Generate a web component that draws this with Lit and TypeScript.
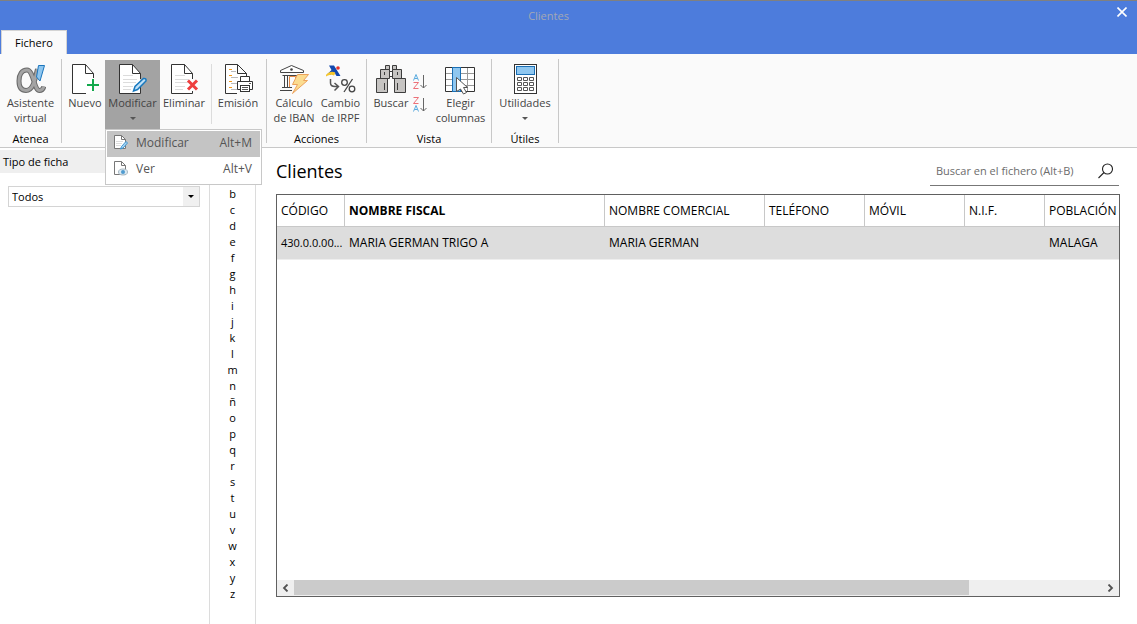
import { LitElement, html, css, svg, nothing, TemplateResult } from 'lit';
import { customElement, property } from 'lit/decorators.js';

const page = svg`
  <path d="M0.5 0.5H13.5L21.5 9.5V29.5H0.5Z" fill="#fff" stroke="none"/>
  <path d="M14 29.5H0.5V0.5H13.5L21.5 9.5V15" fill="none" stroke="#333"/>
  <path d="M13.5 0.5V9.5H21.5" fill="none" stroke="#333"/>`;
const rules = svg`<path d="M4 11.5H14M4 15.5H18M4 18.5H17M4 22.5H14M4 25.5H12" stroke="#dcdcdc"/>`;

const icons: Record<string, TemplateResult> = {
  alpha: html`<svg width="30" height="32" viewBox="0 0 30 32">
    <path d="M21.500 6C19 17 17 27.500 10 27.500C5 27.500 3 23.500 3 18C3 11.500 6 7 11 7C17.500 7 18 27.500 23.500 27.500C26 27.500 27.200 26 27.800 23.500" fill="none" stroke="#6a6a6a" stroke-width="5"/>
    <path d="M21.500 6C19 17 17 27.500 10 27.500C5 27.500 3 23.500 3 18C3 11.500 6 7 11 7C17.500 7 18 27.500 23.500 27.500C26 27.500 27.200 26 27.800 23.500" fill="none" stroke="#a4a4a4" stroke-width="3"/>
    <path d="M22.500 2.500H28.500L24 18L20.500 14Z" fill="#8ec6ef" stroke="#1b75bc"/>
  </svg>`,
  nuevo: html`<svg width="26" height="32" viewBox="0 0 26 32" overflow="visible">
    <path d="M0.500 1.500H13.500L21.500 10.500V30.500H0.500Z" fill="#fff"/>
    <path d="M14 30.500H0.500V1.500H13.500L21.500 10.500V15M13.500 1.500V10.500H21.500" fill="none" stroke="#333"/>
    <path d="M15 22H27M21 16V28" stroke="#12a84b" stroke-width="2"/>
  </svg>`,
  modificar: html`<svg width="27" height="32" viewBox="0 0 27 32" overflow="visible">
    <g transform="translate(0 1)">${page}${rules}<path d="M21.500 22V29.500H13" stroke="#333" fill="none"/></g>
    <path d="M14.500 28L16 23.500L24.500 15.500Q27.500 15 27 18L18.500 26.500Z" fill="#bfe0f7" stroke="#1879bf" stroke-width="1.500"/>
  </svg>`,
  eliminar: html`<svg width="26" height="32" viewBox="0 0 26 32" overflow="visible">
    <g transform="translate(0 1)">${page}${rules}<path d="M21.500 27V29.500H13" stroke="#333" fill="none"/></g>
    <path d="M17 17.500L26 26.500M26 17.500L17 26.500" stroke="#ee3d3d" stroke-width="3"/>
  </svg>`,
  emision: html`<svg width="27" height="32" viewBox="0 0 27 32" overflow="visible">
    <path d="M12 30.500H0.500V1.500H12.500L21.500 10.500V13M12.500 1.500V10.500H21.500" fill="#fff" stroke="#333"/>
    <path d="M4 6.500H7M4 12.500H7M4 18.500H7M4 24.500H7" stroke="#f39a1d"/>
    <path d="M6 8.500H11M6 14.500H13M6 20.500H12M6 26.500H12" stroke="#bbb"/>
    <path d="M15.500 18V13.500H24.500V18M15.500 26.500H12.500V18.500H27.500V26.500H24.500" fill="#fff" stroke="#333"/>
    <rect x="15.500" y="22.500" width="9" height="6" fill="#fff" stroke="#333"/>
    <path d="M17 24.500H23M17 26.500H23M24 20.500H26" stroke="#555"/>
  </svg>`,
  iban: html`<svg width="32" height="32" viewBox="0 0 32 32">
    <path d="M2.500 9.500V7.500L13.500 2.500L25.500 7.500V9.500ZM4.500 12.500H23.500M6.500 13V24M9.500 13V24M20.500 13V16M4 24.500H14M2 27.500H14" fill="#fff" stroke="#444"/>
    <circle cx="13.500" cy="6.500" r="1.300" fill="#444"/>
    <path d="M11.500 24V13.500H17.500V19" fill="none" stroke="#e58a45"/>
    <path d="M19.500 11.500H30.500L25.500 17.500H29.500L14.500 30.500L19.500 21.500H14.500Z" fill="#fbdc90" stroke="#eda35c"/>
  </svg>`,
  irpf: html`<svg width="30" height="32" viewBox="0 0 30 32">
    <path d="M3 2.500H8L14.500 13H10.500L8 9L4 12H0.500L5.500 7Z" fill="#1248ae"/>
    <circle cx="12" cy="5" r="1.800" fill="#e5322b"/>
    <path d="M0 12C3 8.500 7 8 9.500 10L8 12.500C5 11 3 12 0 13.500Z" fill="#f5c62c"/>
    <path d="M4.500 16V20Q4.500 23.500 9 23.500H12M8.500 20L12.500 23.500L8.500 27.500" fill="none" stroke="#555" stroke-width="1.500"/>
    <path d="M26.500 16L18 29" stroke="#444" stroke-width="1.300"/>
    <circle cx="18.500" cy="19.500" r="2.800" fill="none" stroke="#444" stroke-width="1.300"/>
    <circle cx="26" cy="26" r="2.800" fill="none" stroke="#444" stroke-width="1.300"/>
  </svg>`,
  buscar: html`<svg width="30" height="32" viewBox="0 0 30 32">
    <g fill="#c6c4c2" stroke="#3d3d3d">
      <path d="M9.500 2.500H13.500V6.500H9.500ZM16.500 2.500H20.500V6.500H16.500Z"/>
      <path d="M12.500 8.500H17.500V13.500H12.500Z" fill="#fff"/>
      <path d="M4.500 6.500H13.500V15.500H4.500ZM16.500 6.500H25.500V15.500H16.500Z"/>
      <path d="M0.500 15.500H11.500V29.500H0.500ZM18.500 15.500H29.500V29.500H18.500Z"/>
      <path d="M8.500 20V27M21.500 20V27M8.500 9V12M21.500 9V12"/>
    </g>
  </svg>`,
  elegir: html`<svg width="31" height="32" viewBox="0 0 31 32">
    <path d="M0.500 4.500H29.500V28.500H0.500Z" fill="#fff" stroke="#333"/>
    <path d="M1 10.500H29M1 16.500H29M1 22.500H29M15.500 5V28M22.500 5V28" stroke="#999"/>
    <rect x="7.500" y="4.500" width="8" height="24" fill="#8fc7f0" stroke="#1a6fb5"/>
    <path d="M11.500 14.500L22.500 24.500H18.500L21.500 29.500L18.500 31L15.500 26L11.500 28.500Z" fill="#fff" stroke="#555"/>
  </svg>`,
  utilidades: html`<svg width="23" height="32" viewBox="0 0 23 32">
    <rect x="0.500" y="1.500" width="22" height="29" fill="#fff" stroke="#333"/>
    <rect x="2.500" y="3.500" width="18" height="8" fill="#8fc7f0" stroke="#1a6fb5"/>
    <g fill="none" stroke="#555">
      <path d="M3.500 14.500H7.500V17.500H3.500ZM9.500 14.500H13.500V17.500H9.500ZM15.500 14.500H19.500V17.500H15.500Z"/>
      <path d="M3.500 19.500H7.500V22.500H3.500ZM9.500 19.500H13.500V22.500H9.500ZM15.500 19.500H19.500V22.500H15.500Z"/>
      <path d="M3.500 24.500H7.500V27.500H3.500ZM9.500 24.500H13.500V27.500H9.500ZM15.500 24.500H19.500V27.500H15.500Z"/>
    </g>
  </svg>`,
};

const sortLetterA = 'M0.500 6.500L3 0.500L5.500 6.500M1.500 4.500H4.500';
const sortLetterZ = 'M0.500 0.500H5.500L0.500 6.500H5.500';
const sortIcon = (descending: boolean) => html`<svg width="14" height="16" viewBox="0 0 14 16">
  <path d=${descending ? sortLetterZ : sortLetterA} fill="none" stroke=${descending ? '#ec7078' : '#5aaade'}/>
  <g transform="translate(0 8)">
    <path d=${descending ? sortLetterA : sortLetterZ} fill="none" stroke=${descending ? '#5aaade' : '#ec7078'}/>
  </g>
  <path d="M10.500 1V14M7.500 11L10.500 14L13.500 11" fill="none" stroke="#666"/>
</svg>`;

const menuPage = svg`<path d="M0.500 0.500H7.500L11.500 4.500V13.500H0.500Z" fill="#fff" stroke="#777"/>
  <path d="M7.500 0.500V4.500H11.500" fill="none" stroke="#777"/>`;
const menuEdit = html`<svg width="14" height="16" viewBox="0 0 14 16">${menuPage}
  <path d="M2 6.500H9M2 8.500H8M2 10.500H7" stroke="#ddd"/>
  <path d="M6.500 14L7.500 11.500L12 6.500L13.500 8L9 13Z" fill="#a9d6f5" stroke="#3b93d0"/></svg>`;
const menuView = html`<svg width="14" height="16" viewBox="0 0 14 16">${menuPage}
  <ellipse cx="9" cy="11" rx="4.500" ry="3" fill="#dbe9f2" stroke="#a9b8c2"/>
  <circle cx="9" cy="11" r="2" fill="#4f9bd0"/></svg>`;

@customElement('ribbon-button')
export class RibbonButton extends LitElement {
  @property() icon = '';
  @property() label = '';
  @property({ type: Boolean }) menu = false;
  @property({ type: Boolean }) active = false;

  static styles = css`
    :host { display: block; }
    .button {
      display: flex; flex-direction: column; align-items: center;
      width: 100%; height: 70px; padding: 3px 0 0; border: 0;
      background: transparent; color: #444; font: inherit; line-height: 15px;
      white-space: pre;
    }
    .button.active { background: #a3a3a3; }
    .icon { height: 32px; }
    .icon svg { display: block; }
    .arrow {
      margin-top: 7px; width: 0; height: 0;
      border: 3px solid transparent; border-top-color: #555; border-bottom: 0;
    }
  `;

  render() {
    return html`<button
      class="button ${this.active ? 'active' : ''}"
      aria-haspopup=${this.menu ? 'menu' : nothing}
    ><span class="icon">${icons[this.icon]}</span><span>${this.label}</span>${this.menu
      ? html`<span class="arrow"></span>` : nothing}</button>`;
  }
}

const columns = [
  { title: 'CÓDIGO', cls: 'code', value: '430.0.0.00...' },
  { title: 'NOMBRE FISCAL', cls: 'fiscal', value: 'MARIA GERMAN TRIGO A' },
  { title: 'NOMBRE COMERCIAL', cls: 'commercial', value: 'MARIA GERMAN' },
  { title: 'TELÉFONO', cls: 'phone', value: '' },
  { title: 'MÓVIL', cls: 'phone', value: '' },
  { title: 'N.I.F.', cls: 'nif', value: '' },
  { title: 'POBLACIÓN', cls: 'city', value: 'MALAGA' },
];

@customElement('app-root')
export class AppRoot extends LitElement {
  static styles = css`
    :host {
      display: flex; flex-direction: column; min-height: 100vh; box-sizing: border-box;
      background: #fff; color: #000;
      font-family: "Open Sans", "Noto Sans", sans-serif; font-size: 11px; line-height: 15px;
    }
    * { box-sizing: border-box; }
    button, input, select { font: inherit; color: inherit; }

    .titlebar {
      display: grid; grid-template-columns: 1fr 40px; grid-template-rows: 29px 24px;
      height: 54px; border-top: 1px solid #808080; background: #4d7cdc;
    }
    .caption { align-self: center; text-align: center; color: #a3a8b4; }
    .close { display: grid; place-items: center; height: 22px; padding: 0 0 0 10px; border: 0; background: none; }
    .tab {
      justify-self: start; width: 66px; height: 25px; margin-left: 1px; padding: 0 0 2px;
      border: 1px solid #d4d4d4; border-bottom: 0; background: #fafafa;
    }

    .ribbon { display: flex; height: 94px; padding-top: 5px; background: #fafafa; border-bottom: 1px solid #c8c8c8; }
    .group { display: flex; flex-direction: column; height: 84px; border-right: 1px solid #c8c8c8; }
    .tools { display: flex; height: 71px; padding: 1px 3px 0; }
    .group-name { line-height: 18px; text-align: center; }
    .flush { padding-left: 0; padding-right: 0; }
    .w40 { width: 40px; }
    .w42 { width: 42px; }
    .w45 { width: 45px; }
    .w48 { width: 48px; }
    .w50 { width: 50px; }
    .w55 { width: 55px; }
    .w60 { width: 60px; }
    .w61 { width: 61px; }
    .divider { width: 1px; height: 60px; margin: 4px 1px 0 3px; background: #dcdcdc; }
    .sorts { display: flex; flex-direction: column; gap: 7px; width: 21px; padding: 14px 0 0 1px; }
    .sort { display: grid; width: 14px; height: 16px; padding: 0; border: 0; background: none; }

    .menu-anchor { position: relative; }
    .menu {
      position: absolute; z-index: 2; top: 69px; left: 0; width: 157px; padding: 1px;
      border: 1px solid #c8c8c8; background: #fff; font-size: 12px;
    }
    .item {
      display: grid; grid-template-columns: 22px 1fr auto; align-items: center;
      width: 100%; height: 26px; padding: 0 8px 3px 7px; border: 0; background: none;
      color: #555; text-align: left;
    }
    .item.selected { background: #c4c4c4; }

    .body { flex: 1; display: flex; }
    .sidebar { width: 210px; border-right: 1px solid #dcdcdc; padding-top: 2px; }
    .side-title { display: block; height: 23px; padding-left: 3px; line-height: 23px; background: #efefef; }
    .select-wrap { display: grid; grid-template-columns: 1fr 16px; margin: 13px 9px 0 8px; border: 1px solid #d4d4d4; }
    .select {
      grid-area: 1 / 1 / 2 / 3; width: 100%; height: 19px; padding: 0 3px;
      border: 0; background: none; appearance: none; line-height: 19px;
    }
    .select-arrow { grid-area: 1 / 2; display: grid; place-items: center; background: #f0f0f0; pointer-events: none; }
    .select-arrow::after {
      content: ""; border: 3px solid transparent; border-top-color: #000; border-bottom: 0;
    }
    .letters { display: flex; flex-direction: column; width: 46px; padding-top: 38px; border-right: 1px solid #dcdcdc; }
    .letter { height: 16px; padding: 0; border: 0; background: none; line-height: 16px; text-align: center; }

    .main { flex: 1; min-width: 0; display: flex; flex-direction: column; padding: 8px 17px 27px 20px; }
    .heading { display: flex; justify-content: space-between; height: 38px; }
    .title { margin: 0; font-size: 18px; font-weight: 400; line-height: 30px; }
    .search { display: flex; align-items: center; width: 189px; height: 30px; margin-right: 1px; border-bottom: 1px solid #777; }
    .search-input { flex: 1; min-width: 0; padding: 0 6px; border: 0; outline: 0; background: none; }
    .search-input::placeholder { color: #6c6c6c; opacity: 1; }
    .search-button { padding: 0 5px 0 0; border: 0; background: none; }
    .search-button svg { display: block; }

    .frame { flex: 1; display: flex; flex-direction: column; border: 1px solid #606060; overflow: hidden; }
    .grid { width: 100%; border-collapse: separate; border-spacing: 0; table-layout: fixed; font-size: 12px; line-height: 16px; }
    .cell { height: 32px; padding: 0 0 0 4px; text-align: left; font-weight: 400; white-space: nowrap; }
    .head { border-right: 1px solid #c8c8c8; border-bottom: 1px solid #c8c8c8; }
    .row .cell { height: 33px; background: #ddd; border-bottom: 1px solid #eee; }
    .row .code { font-size: 11px; }
    .head.fiscal { font-weight: 700; }
    .code { width: 68px; }
    .fiscal { width: 260px; }
    .commercial { width: 160px; }
    .phone { width: 100px; }
    .nif { width: 80px; }
    .head.city { border-right: 0; }
    .scroll { display: grid; grid-template-columns: 17px 1fr 17px; height: 16px; margin-top: auto; background: #efefef; }
    .arrow { display: grid; place-items: center; padding: 0; border: 0; background: none; }
    .thumb { width: 83.5%; height: 15px; background: #cbcbcb; }
  `;

  render() {
    return html`
      <header class="titlebar">
        <span class="caption">Clientes</span>
        <button class="close" aria-label="Cerrar">
          <svg width="10" height="10" viewBox="0 0 10 10"><path d="M0.500 0.500L9.500 9.500M9.500 0.500L0.500 9.500" stroke="#fff" stroke-width="1.600"/></svg>
        </button>
        <button class="tab">Fichero</button>
      </header>

      <nav class="ribbon">
        <section class="group">
          <div class="tools flush"><ribbon-button class="w61" icon="alpha" .label=${'Asistente\nvirtual'}></ribbon-button></div>
          <span class="group-name">Atenea</span>
        </section>
        <section class="group">
          <div class="tools">
            <ribbon-button class="w40" icon="nuevo" label="Nuevo"></ribbon-button>
            <div class="menu-anchor">
              <ribbon-button class="w55" icon="modificar" label="Modificar" menu active></ribbon-button>
              <div class="menu" role="menu">
                <button class="item selected" role="menuitem">${menuEdit}<span>Modificar</span><span>Alt+M</span></button>
                <button class="item" role="menuitem">${menuView}<span>Ver</span><span>Alt+V</span></button>
              </div>
            </div>
            <ribbon-button class="w48" icon="eliminar" label="Eliminar"></ribbon-button>
            <span class="divider"></span>
            <ribbon-button class="w50" icon="emision" label="Emisión"></ribbon-button>
          </div>
        </section>
        <section class="group">
          <div class="tools">
            <ribbon-button class="w48" icon="iban" .label=${'Cálculo\nde IBAN'}></ribbon-button>
            <ribbon-button class="w45" icon="irpf" .label=${'Cambio\nde IRPF'}></ribbon-button>
          </div>
          <span class="group-name">Acciones</span>
        </section>
        <section class="group">
          <div class="tools">
            <ribbon-button class="w42" icon="buscar" label="Buscar"></ribbon-button>
            <div class="sorts">
              <button class="sort" aria-label="Orden ascendente">${sortIcon(false)}</button>
              <button class="sort" aria-label="Orden descendente">${sortIcon(true)}</button>
            </div>
            <ribbon-button class="w55" icon="elegir" .label=${'Elegir\ncolumnas'}></ribbon-button>
          </div>
          <span class="group-name">Vista</span>
        </section>
        <section class="group">
          <div class="tools"><ribbon-button class="w60" icon="utilidades" label="Utilidades" menu></ribbon-button></div>
          <span class="group-name">Útiles</span>
        </section>
      </nav>

      <div class="body">
        <aside class="sidebar">
          <label class="side-title" for="tipo">Tipo de ficha</label>
          <div class="select-wrap">
            <select class="select" id="tipo"><option>Todos</option></select>
            <span class="select-arrow"></span>
          </div>
        </aside>
        <nav class="letters">
          ${[...'bcdefghijklmnñopqrstuvwxyz'].map((l) => html`<button class="letter">${l}</button>`)}
        </nav>
        <main class="main">
          <div class="heading">
            <h1 class="title">Clientes</h1>
            <div class="search">
              <input class="search-input" aria-label="Buscar en el fichero" placeholder="Buscar en el fichero (Alt+B)">
              <button class="search-button" aria-label="Buscar">
                <svg width="16" height="16" viewBox="0 0 16 16" fill="none" stroke="#222" stroke-width="1.100">
                  <circle cx="9.500" cy="6" r="5"/><path d="M6 9.500L0.500 15"/>
                </svg>
              </button>
            </div>
          </div>
          <div class="frame">
            <table class="grid">
              <thead><tr>${columns.map((c) => html`<th class="cell head ${c.cls}">${c.title}</th>`)}</tr></thead>
              <tbody><tr class="row">${columns.map((c) => html`<td class="cell ${c.cls}">${c.value}</td>`)}</tr></tbody>
            </table>
            <div class="scroll">
              <button class="arrow" aria-label="Desplazar a la izquierda">
                <svg width="7" height="8" viewBox="0 0 7 8"><path d="M5.500 0.500L2 4L5.500 7.500" fill="none" stroke="#505050" stroke-width="1.800"/></svg>
              </button>
              <div><div class="thumb"></div></div>
              <button class="arrow" aria-label="Desplazar a la derecha">
                <svg width="7" height="8" viewBox="0 0 7 8"><path d="M1.500 0.500L5 4L1.500 7.500" fill="none" stroke="#505050" stroke-width="1.800"/></svg>
              </button>
            </div>
          </div>
        </main>
      </div>
    `;
  }
}
